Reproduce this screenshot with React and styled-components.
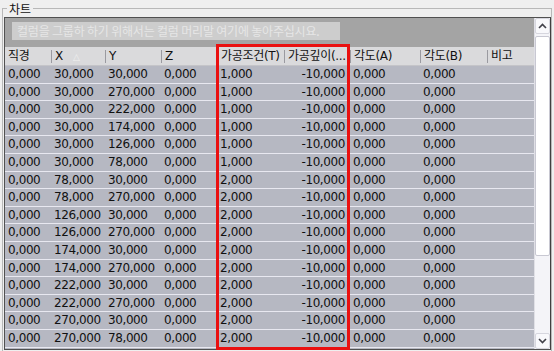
import React from "react";
import styled, { createGlobalStyle } from "styled-components";

const Global = createGlobalStyle`
  html, body { margin: 0; padding: 0; background: #efefef; }
  body { font-family: "DejaVu Sans", "Noto Sans CJK KR", sans-serif; font-size: 12px; color: #111; }
  #root { width: 554px; height: 351px; overflow: hidden; }
`;

const Page = styled.div`
  width: 554px;
  height: 351px;
  box-sizing: border-box;
  padding: 2px 2px 0 2px;
  position: relative;
`;

const Group = styled.fieldset`
  margin: 0;
  padding: 2px 0 0 1px;
  border: 1px solid #b8b8b8;
  border-bottom: none;
  height: 349px;
  box-sizing: border-box;
  min-width: 0;
`;

const Legend = styled.legend`
  padding: 0 2px;
  margin-left: 3px;
  font-family: "Noto Sans CJK KR", sans-serif;
  font-size: 12px;
  line-height: 13px;
  color: #111;
`;

const Grid = styled.div`
  position: relative;
  width: 547px;
  height: 333px;
  border: 1px solid #505050;
  border-right-color: #404040;
  box-sizing: border-box;
  display: flex;
  background: #b6b8c2;
`;

const Main = styled.div`
  flex: 1;
  display: flex;
  flex-direction: column;
  min-width: 0;
`;

const GroupPanel = styled.div`
  height: 29px;
  background: #a4a4a4;
  display: flex;
  align-items: flex-start;
  padding: 4px 0 0 7px;
  box-sizing: border-box;
`;

const GroupHint = styled.div`
  background: #cdcdcd;
  color: #e6e6e6;
  font-family: "Noto Sans CJK KR", sans-serif;
  font-size: 12px;
  height: 18px;
  line-height: 18px;
  padding: 0 5px;
  width: 328px;
  box-sizing: border-box;
  white-space: nowrap;
  overflow: hidden;
  letter-spacing: -0.2px;
`;

const Header = styled.div`
  display: grid;
  grid-template-columns: var(--cols);
  height: 18px;
  background: #dadadc;
  border-bottom: 1px solid #c4c4c8;
`;

const HeadCell = styled.div`
  position: relative;
  padding-left: ${(p) => (p.$first ? "3px" : "4px")};
  line-height: 18px;
  white-space: nowrap;
  overflow: hidden;
  letter-spacing: -0.3px;
  &::before {
    content: "";
    display: ${(p) => (p.$first ? "none" : "block")};
    position: absolute;
    left: 0;
    top: 3px;
    bottom: 2px;
    width: 1px;
    background: #9a9aa0;
  }
`;

const Sort = styled.span`
  color: #f0f0f0;
  font-size: 9px;
  margin-left: 10px;
`;

const Row = styled.div`
  display: grid;
  grid-template-columns: var(--cols);
  height: 17.6px;
  line-height: 17px;
  border-bottom: 1px solid #e8e8f0;
  box-sizing: border-box;
  background: #b6b8c2;
`;

const Cell = styled.div`
  padding-left: ${(p) => (p.$right ? 0 : "3px")};
  padding-right: ${(p) => (p.$right ? "5px" : 0)};
  text-align: ${(p) => (p.$right ? "right" : "left")};
  white-space: nowrap;
  overflow: hidden;
  letter-spacing: -0.4px;
`;

const Scroll = styled.div`
  width: 16px;
  background: #f4f4f8;
  border-left: 1px solid #e0e0e6;
  display: flex;
  flex-direction: column;
  box-sizing: border-box;
`;

const Arrow = styled.div`
  height: 16px;
  display: flex;
  align-items: center;
  justify-content: center;
  background: #f8f8fb;
  border: 1px solid #d6d6de;
  border-radius: 2px;
  box-sizing: border-box;
`;

const Track = styled.div`
  flex: 1;
  display: flex;
  flex-direction: column;
  padding: 2px 0;
`;

const Thumb = styled.div`
  height: 220px;
  background: #ffffff;
  border: 1px solid #c8c8d2;
  border-radius: 2px;
  box-sizing: border-box;
`;

const Highlight = styled.div`
  position: absolute;
  left: 211px;
  top: 26px;
  width: 134px;
  height: 306px;
  border: 3px solid #ea1010;
  box-sizing: border-box;
  pointer-events: none;
`;

const cols = "46px 54px 56px 56px 67px 66px 70px 67px 47px";

const headers = ["직경", "X", "Y", "Z", "가공조건(T)", "가공깊이(...", "각도(A)", "각도(B)", "비고"];

const xy = [
  ["30,000", "30,000", "1,000"],
  ["30,000", "270,000", "1,000"],
  ["30,000", "222,000", "1,000"],
  ["30,000", "174,000", "1,000"],
  ["30,000", "126,000", "1,000"],
  ["30,000", "78,000", "1,000"],
  ["78,000", "30,000", "2,000"],
  ["78,000", "270,000", "2,000"],
  ["126,000", "30,000", "2,000"],
  ["126,000", "270,000", "2,000"],
  ["174,000", "30,000", "2,000"],
  ["174,000", "270,000", "2,000"],
  ["222,000", "30,000", "2,000"],
  ["222,000", "270,000", "2,000"],
  ["270,000", "30,000", "2,000"],
  ["270,000", "78,000", "2,000"],
];

const Chevron = ({ up }) => (
  <svg width="9" height="6" viewBox="0 0 9 6">
    <path
      d={up ? "M1 5 L4.5 1.5 L8 5" : "M1 1 L4.5 4.5 L8 1"}
      fill="none"
      stroke="#404048"
      strokeWidth="1.6"
    />
  </svg>
);

export default function App() {
  return (
    <Page>
      <Global />
      <Group>
        <Legend>차트</Legend>
        <Grid style={{ "--cols": cols }}>
          <Main>
            <GroupPanel>
              <GroupHint>컬럼을 그룹하 하기 위해서는 컬럼 머리말 여기에 놓아주십시요.</GroupHint>
            </GroupPanel>
            <Header>
              {headers.map((h, i) => (
                <HeadCell key={i} $first={i === 0}>
                  {h}
                  {i === 1 && <Sort>△</Sort>}
                </HeadCell>
              ))}
            </Header>
            {xy.map(([x, y, t], i) => (
              <Row key={i}>
                <Cell>0,000</Cell>
                <Cell>{x}</Cell>
                <Cell>{y}</Cell>
                <Cell>0,000</Cell>
                <Cell>{t}</Cell>
                <Cell $right>-10,000</Cell>
                <Cell>0,000</Cell>
                <Cell>0,000</Cell>
                <Cell></Cell>
              </Row>
            ))}
          </Main>
          <Scroll>
            <Arrow>
              <Chevron up />
            </Arrow>
            <Track>
              <Thumb />
            </Track>
            <Arrow>
              <Chevron />
            </Arrow>
          </Scroll>
          <Highlight />
        </Grid>
      </Group>
    </Page>
  );
}
